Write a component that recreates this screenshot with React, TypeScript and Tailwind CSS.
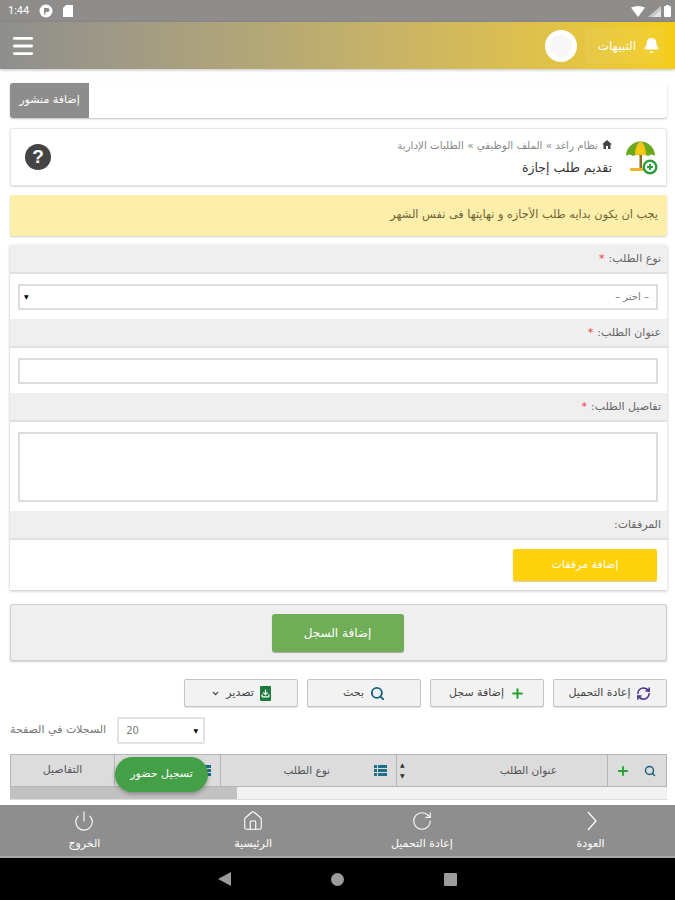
import { Bell, ChevronDown, Download, Home, Plus, Power, RefreshCw, RotateCw, Search, Menu } from "lucide-react";

function FieldHead({ label, req }: { label: string; req?: boolean }) {
  return (
    <div className="h-[29px] shrink-0 bg-[#efefef] border-b-2 border-[#e0e0e0] flex items-center px-[6px] pt-[2px] text-[11px] text-[#666]">
      <span>{label}</span>
      {req && <span className="text-[#e53935] mr-1">*</span>}
    </div>
  );
}

function ToolBtn({ children }: { children: React.ReactNode }) {
  return (
    <div className="w-[114px] h-[28px] bg-[#f2f2f2] border border-[#c4c4c4] rounded-[2px] shadow-[0_1px_1px_rgba(0,0,0,0.12)] flex items-center justify-center gap-[6px] text-[11px] text-[#444]">
      {children}
    </div>
  );
}

function NavItem({ icon, label }: { icon: React.ReactNode; label: string }) {
  return (
    <div className="flex flex-col items-center justify-center gap-[4px] pt-[2px] text-[11px] text-white">
      {icon}
      <span>{label}</span>
    </div>
  );
}

function ListGlyph() {
  return (
    <svg width="13" height="13" viewBox="0 0 13 13" fill="#1f6f8b">
      <rect x="0" y="1" width="3" height="3" />
      <rect x="4" y="1" width="9" height="3" />
      <rect x="0" y="5" width="3" height="3" />
      <rect x="4" y="5" width="9" height="3" />
      <rect x="0" y="9" width="3" height="3" />
      <rect x="4" y="9" width="9" height="3" />
    </svg>
  );
}

export default function App() {
  return (
    <div dir="rtl" className="relative w-[675px] h-[900px] overflow-hidden bg-white flex flex-col font-['DejaVu_Sans',sans-serif]">
      {/* Status bar */}
      <div dir="ltr" className="h-[22px] shrink-0 bg-[#8e8d8b] flex items-center justify-between pl-2 pr-[4px] text-white">
        <div className="flex items-center gap-[10px]">
          <span className="text-[11px] font-['Roboto',sans-serif]">1:44</span>
          <svg width="14" height="14" viewBox="0 0 14 14">
            <circle cx="7" cy="7" r="6.5" fill="#fff" />
            <path d="M5 4h3.5a2 2 0 0 1 0 4H6.5v2.5H5z" fill="#8e8d8b" />
          </svg>
          <svg width="10" height="12" viewBox="0 0 10 12" fill="#fff">
            <path d="M3 0h7v12H0V3z" />
          </svg>
        </div>
        <div className="flex items-center gap-[3px]">
          <svg width="14" height="11" viewBox="0 0 14 11" fill="#fff">
            <path d="M0 1.5Q7-1.5 14 1.5L7 11z" />
          </svg>
          <svg width="13" height="11" viewBox="0 0 13 11">
            <path d="M0 11L13 0v11z" fill="#c9c9c9" />
            <path d="M5 11L13 4v7z" fill="#fff" opacity="0.5" />
          </svg>
          <svg width="7" height="12" viewBox="0 0 7 12" fill="#fff">
            <rect x="0" y="1" width="7" height="11" rx="1" />
            <rect x="2" y="0" width="3" height="2" />
          </svg>
        </div>
      </div>

      {/* Header */}
      <div className="h-[47px] shrink-0 bg-gradient-to-l from-[#f4cd12] to-[#8e8e8e] flex items-center justify-between pr-[10px] pl-[10px] shadow-[0_1px_3px_rgba(0,0,0,0.25)]">
        <div className="flex items-center gap-[8px]">
          <div className="w-[80px] h-[37px] bg-white/5 rounded-[2px] flex items-center gap-[7px] pr-[5px] text-white text-[12px]">
            <Bell size={17} fill="#fff" strokeWidth={1.5} />
            <span>التبيهات</span>
          </div>
          <div className="w-[32px] h-[32px] rounded-full bg-white flex items-center justify-center">
            <div className="w-[22px] h-[22px] rounded-full bg-[#f7f7f7]" />
          </div>
        </div>
        <Menu size={26} color="#fff" strokeWidth={2.6} />
      </div>

      {/* Main */}
      <div className="flex-1 min-h-0 overflow-hidden pr-[8px] pl-[10px] pt-[14px] flex flex-col">
        {/* Post */}
        <div className="h-[35px] shrink-0 bg-white rounded-[3px] shadow-[0_1px_2px_rgba(0,0,0,0.25)] flex justify-end">
          <div className="w-[79px] h-full bg-[#8d8d8d] rounded-l-[3px] flex items-center justify-center text-white text-[11px]">إضافة منشور</div>
        </div>

        {/* Title card */}
        <div className="h-[58px] shrink-0 mt-[10px] bg-white border border-[#e6e6e6] rounded-[2px] shadow-[0_1px_2px_rgba(0,0,0,0.15)] flex items-center justify-between pr-[8px] pl-[14px]">
          <div className="flex items-center gap-[12px]">
            <svg width="34" height="40" viewBox="0 0 34 40">
              <path d="M2 19A14.5 14.5 0 0 1 31 19Q28 16 24 19Q20 16 16.5 19Q13 16 9 19Q5 16 2 19z" fill="#6aa81e" />
              <path d="M11 19Q11 7 16.5 4.5Q22 7 22 19Q19 16.5 16.5 19Q14 16.5 11 19z" fill="#f5c518" />
              <rect x="15.5" y="18" width="2.5" height="15" fill="#8a6d1d" />
              <rect x="6" y="31" width="19" height="3" rx="1" fill="#f1b52b" />
              <circle cx="26" cy="30" r="7.5" fill="#2e9e3f" />
              <circle cx="26" cy="30" r="5" fill="#fff" />
              <path d="M26 27v6M23 30h6" stroke="#2e9e3f" strokeWidth="2" />
            </svg>
            <div>
              <div className="flex items-center gap-1 text-[10.3px] text-[#8a8a8a] leading-[12px]">
                <svg width="10" height="9" viewBox="0 0 10 9" fill="#444">
                  <path d="M5 0L0 4.5h1.5V9h2.5V6h2v3h2.5V4.5H10z" />
                </svg>
                <span>نظام راغد » الملف الوظيفي » الطلبات الإدارية</span>
              </div>
              <div className="mt-[9px] text-[12.5px] text-[#333] leading-[16px]">تقديم طلب إجازة</div>
            </div>
          </div>
          <div className="w-[26px] h-[26px] rounded-full bg-[#444] flex items-center justify-center text-white text-[19px] font-bold font-['Liberation_Sans',sans-serif]">?</div>
        </div>

        {/* Alert */}
        <div className="h-[41px] shrink-0 mt-[9px] bg-[#fdeeaa] rounded-[2px] shadow-[0_1px_2px_rgba(0,0,0,0.2)] flex items-center px-[9px] text-[11.3px] text-[#6f6438]">
          يجب ان يكون بدايه طلب الأجازه و نهايتها فى نفس الشهر
        </div>

        {/* Form */}
        <div className="h-[345px] shrink-0 mt-[9px] bg-white shadow-[0_1px_3px_rgba(0,0,0,0.25)] flex flex-col">
          <FieldHead label="نوع الطلب:" req />
          <div className="h-[45px] shrink-0 flex items-center pr-[9px] pl-[8px]">
            <div className="w-full h-[26px] border-2 border-[#dcdcdc] rounded-[1px] flex items-center justify-between pr-[7px] pl-[4px] text-[10px] text-[#777]">
              <span>– اختر –</span>
              <span className="text-[6px] text-black">▼</span>
            </div>
          </div>
          <FieldHead label="عنوان الطلب:" req />
          <div className="h-[45px] shrink-0 flex items-center pr-[9px] pl-[8px]">
            <div className="w-full h-[26px] border-2 border-[#dcdcdc] rounded-[1px]" />
          </div>
          <FieldHead label="تفاصيل الطلب:" req />
          <div className="h-[89px] shrink-0 flex items-center pr-[9px] pl-[8px]">
            <div className="w-full h-[70px] border-2 border-[#dcdcdc] rounded-[1px]" />
          </div>
          <FieldHead label="المرفقات:" />
          <div className="flex-1 px-[10px] pt-[9px]">
            <div className="w-[144px] h-[32px] bg-[#fdd20a] rounded-[2px] shadow-[0_1px_1px_rgba(0,0,0,0.2)] flex items-center justify-center text-white text-[11px]">إضافة مرفقات</div>
          </div>
        </div>

        {/* Submit */}
        <div className="h-[57px] shrink-0 mt-[14px] bg-[#efefef] border border-[#cfcfcf] rounded-[2px] shadow-[0_1px_2px_rgba(0,0,0,0.2)] flex items-center justify-center pr-[2px]">
          <div className="w-[132px] h-[38px] bg-[#70ad57] rounded-[3px] shadow-[0_1px_1px_rgba(0,0,0,0.3)] flex items-center justify-center text-white text-[12px]">إضافة السجل</div>
        </div>

        {/* Toolbar */}
        <div className="h-[28px] shrink-0 mt-[18px] flex gap-[9px]">
          <ToolBtn>
            <RefreshCw size={15} color="#4a2f8f" strokeWidth={2.4} />
            <span>إعادة التحميل</span>
          </ToolBtn>
          <ToolBtn>
            <Plus size={15} color="#22a52f" strokeWidth={3.2} />
            <span>إضافة سجل</span>
          </ToolBtn>
          <ToolBtn>
            <Search size={15} color="#17607f" strokeWidth={3} />
            <span>بحث</span>
          </ToolBtn>
          <ToolBtn>
            <span className="w-[11px] h-[15px] bg-[#1d7a3c] rounded-[1px] flex items-center justify-center">
              <Download size={9} color="#fff" strokeWidth={3} />
            </span>
            <span>تصدير</span>
            <ChevronDown size={9} color="#333" strokeWidth={3} />
          </ToolBtn>
        </div>

        {/* Page size */}
        <div className="h-[27px] shrink-0 mt-[10px] flex items-center justify-end gap-[11px] text-[11px] text-[#777]">
          <div dir="ltr" className="w-[88px] h-[27px] border-2 border-[#e2e2e2] rounded-[2px] flex items-center justify-between pl-[7px] pr-[5px] text-[10px]">
            <span>20</span>
            <span className="text-[6px] text-black">▼</span>
          </div>
          <span>السجلات في الصفحة</span>
        </div>

        {/* Table */}
        <div className="h-[33px] shrink-0 mt-[10px] bg-[#dcdcdc] border border-[#b5b5b5] flex text-[10.5px] text-[#555]">
          <div className="w-[59px] shrink-0 border-l border-[#b5b5b5] flex items-center justify-between pr-[10px] pl-[8px]">
            <Search size={12} color="#17607f" strokeWidth={3} />
            <Plus size={14} color="#22a52f" strokeWidth={3.2} />
          </div>
          <div className="w-[211px] shrink-0 border-l border-[#b5b5b5] flex items-center justify-between pr-[50px] pl-[3px]">
            <span>عنوان الطلب</span>
            <span className="flex flex-col gap-[5px] text-[6px] leading-[6px] text-[#333]">
              <span>▲</span>
              <span>▼</span>
            </span>
          </div>
          <div className="w-[176px] shrink-0 border-l border-[#b5b5b5] flex items-center gap-[44px] pr-[9px]">
            <ListGlyph />
            <span>نوع الطلب</span>
          </div>
          <div className="w-[106px] shrink-0 border-l border-[#b5b5b5] flex items-center pr-[9px]">
            <ListGlyph />
          </div>
          <div className="flex-1 flex items-center justify-center text-[11px]">التفاصيل</div>
        </div>
        <div dir="ltr" className="h-[13px] shrink-0 bg-[#f2f2f2] border-b border-[#dcdcdc]">
          <div className="w-[227px] h-full bg-[#c1c1c1]" />
        </div>
      </div>

      {/* Bottom nav */}
      <div className="h-[53px] shrink-0 bg-[#8e8e8e] grid grid-cols-4 border-b-2 border-[#a8a8a8]">
        <NavItem
          icon={
            <svg width="22" height="22" viewBox="0 0 22 22" fill="none" stroke="#fff" strokeWidth="1.2">
              <path d="M8 2l8 9-8 9" />
            </svg>
          }
          label="العودة"
        />
        <NavItem icon={<RotateCw size={22} strokeWidth={1.2} />} label="إعادة التحميل" />
        <NavItem icon={<Home size={22} strokeWidth={1.2} />} label="الرئيسية" />
        <NavItem icon={<Power size={22} strokeWidth={1.2} />} label="الخروج" />
      </div>

      {/* Android nav */}
      <div className="h-[42px] shrink-0 bg-black flex items-center justify-center gap-[100px]">
        <div className="w-[13px] h-[13px] bg-[#9c9c9c] rounded-[1px]" />
        <div className="w-[13px] h-[13px] bg-[#9c9c9c] rounded-full" />
        <svg width="13" height="14" viewBox="0 0 13 14" fill="#9c9c9c">
          <path d="M13 0v14L0 7z" />
        </svg>
      </div>

      {/* FAB */}
      <div className="absolute left-[115px] top-[757px] w-[93px] h-[35px] rounded-full bg-[#43a047] shadow-[0_2px_4px_rgba(0,0,0,0.3)] flex items-center justify-center text-white text-[11px]">تسجيل حضور</div>
    </div>
  );
}
